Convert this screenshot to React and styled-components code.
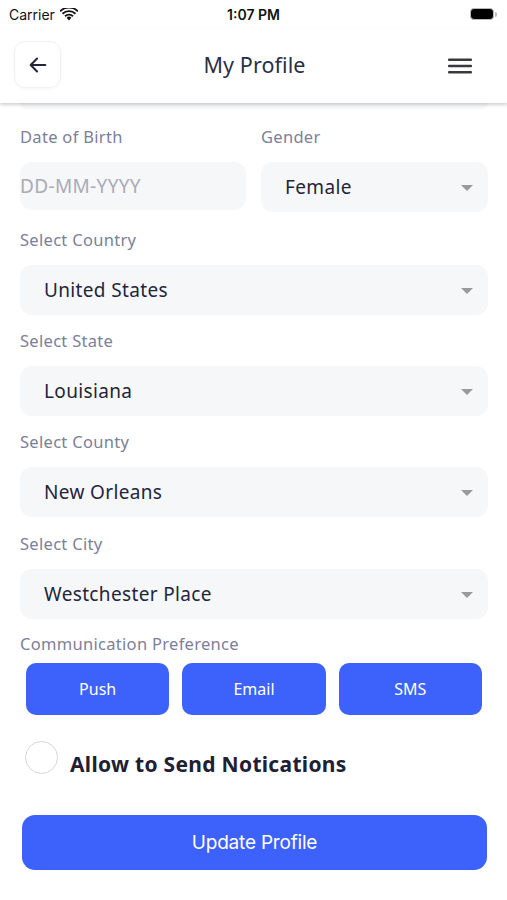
import React from "react";
import styled, { createGlobalStyle } from "styled-components";

const GlobalStyle = createGlobalStyle`
  html, body {
    margin: 0;
    padding: 0;
    background: #ffffff;
  }
  * {
    box-sizing: border-box;
  }
`;

const Screen = styled.div`
  width: 507px;
  height: 900px;
  overflow: hidden;
  background: #fff;
  font-family: "Noto Sans", "Open Sans", sans-serif;
`;

const StatusBar = styled.div`
  height: 28px;
  display: grid;
  grid-template-columns: 1fr auto 1fr;
  align-items: center;
  padding: 0 9px;
  font-family: "Inter", "Liberation Sans", sans-serif;
  font-size: 14px;
  color: #111;
`;

const Carrier = styled.div`
  display: flex;
  align-items: center;
  gap: 5px;
`;

const Clock = styled.div`
  font-weight: 600;
`;

const Battery = styled.div`
  justify-self: end;
  display: flex;
  align-items: center;
  gap: 1px;
  margin-right: 1px;
`;

const BatteryBody = styled.div`
  width: 24px;
  height: 12px;
  border-radius: 4px;
  background: #000;
  border: 1.5px solid #b9b9b9;
`;

const BatteryTip = styled.div`
  width: 2px;
  height: 5px;
  border-radius: 0 2px 2px 0;
  background: #b9b9b9;
`;

const Header = styled.header`
  height: 75px;
  display: flex;
  align-items: center;
  justify-content: space-between;
  padding: 0 35px 0 14px;
  box-shadow: 0 2px 3px rgba(0, 0, 0, 0.18);
  position: relative;
  z-index: 2;
  background: #fff;
`;

const BackButton = styled.div`
  width: 47px;
  height: 47px;
  border-radius: 11px;
  border: 1px solid #f1f1f3;
  box-shadow: 0 1px 3px rgba(0, 0, 0, 0.04);
  display: flex;
  align-items: center;
  justify-content: center;
  margin-top: -2px;
`;

const Title = styled.h1`
  margin: -3px 0 0 0;
  font-size: 21.5px;
  font-weight: 400;
  color: #2b2e45;
  letter-spacing: 0.1px;
`;

const Content = styled.main`
  padding: 0 19px 0 20px;
`;

const CutField = styled.div`
  height: 6px;
  background: #f6f7f9;
  border-radius: 0 0 12px 12px;
`;

const Row = styled.div`
  display: grid;
  grid-template-columns: ${(p) => p.$cols || "1fr"};
  column-gap: 15px;
`;

const Group = styled.div`
  display: flex;
  flex-direction: column;
`;

const Label = styled.label`
  height: ${(p) => p.$h || 52}px;
  display: flex;
  align-items: flex-end;
  padding-bottom: 14px;
  font-size: 16.5px;
  letter-spacing: 0.3px;
  color: #7c8098;
  white-space: nowrap;
`;

const Field = styled.div`
  height: ${(p) => p.$h || 50}px;
  background: #f6f7f9;
  border-radius: 12px;
  display: flex;
  align-items: center;
  justify-content: space-between;
  padding: ${(p) => (p.$flush ? "0 0 1px 0" : "0 15px 0 24px")};
  font-size: 19px;
  color: ${(p) => (p.$placeholder ? "#a9abb5" : "#23253a")};
  letter-spacing: 0.35px;
`;

const Caret = styled.span`
  width: 0;
  height: 0;
  border-left: 6px solid transparent;
  border-right: 6px solid transparent;
  border-top: 6px solid #9a9a9e;
  margin-top: 2px;
`;

const PrefLabel = styled(Label)`
  height: 44px;
  padding-bottom: 8px;
`;

const PrefRow = styled.div`
  display: grid;
  grid-template-columns: repeat(3, 1fr);
  column-gap: 13px;
  padding: 0 6px 0 6px;
`;

const PrefButton = styled.button`
  height: 52px;
  border: none;
  border-radius: 10px;
  background: #3d62fb;
  color: #fff;
  font-family: "Noto Sans", sans-serif;
  font-size: 16px;
`;

const CheckRow = styled.div`
  display: flex;
  align-items: flex-start;
  gap: 12px;
  padding: 26px 0 0 5px;
`;

const Radio = styled.span`
  width: 33px;
  height: 33px;
  border-radius: 50%;
  border: 1.5px solid #d6d6d8;
  flex-shrink: 0;
`;

const CheckText = styled.span`
  font-size: 21px;
  font-weight: 700;
  color: #1e2033;
  margin-top: 9px;
  letter-spacing: 0.3px;
`;

const SubmitButton = styled.button`
  width: 465px;
  height: 55px;
  margin: 37px 0 0 2px;
  border: none;
  border-radius: 13px;
  background: #3d62fb;
  color: #fff;
  font-family: "Inter", "Liberation Sans", sans-serif;
  font-size: 19px;
  letter-spacing: -0.2px;
`;

const selects = [
  { label: "Select Country", value: "United States", h: 53 },
  { label: "Select State", value: "Louisiana", h: 51 },
  { label: "Select County", value: "New Orleans", h: 51 },
  { label: "Select City", value: "Westchester Place", h: 52 },
];

const WifiIcon = () => (
  <svg width="18" height="13" viewBox="0 0 18 13">
    <path d="M9 12.5 6.6 9.8a3.4 3.4 0 0 1 4.8 0Z" fill="#111" />
    <path d="M4.4 7.6a6.5 6.5 0 0 1 9.2 0l-1.3 1.4a4.6 4.6 0 0 0-6.6 0Z" fill="#111" />
    <path d="M1.9 5.1a10 10 0 0 1 14.2 0l-1.3 1.4a8.1 8.1 0 0 0-11.6 0Z" fill="#111" />
    <path d="M-0.5 2.6a13.5 13.5 0 0 1 19 0l-1.2 1.3a11.7 11.7 0 0 0-16.6 0Z" fill="#111" />
  </svg>
);

const App = () => {
  return (
    <Screen>
      <GlobalStyle />
      <StatusBar>
        <Carrier>
          Carrier <WifiIcon />
        </Carrier>
        <Clock>1:07 PM</Clock>
        <Battery>
          <BatteryBody />
          <BatteryTip />
        </Battery>
      </StatusBar>
      <Header>
        <BackButton>
          <svg width="22" height="22" viewBox="0 0 24 24" fill="none" stroke="#23253a" strokeWidth="2.2" strokeLinecap="round" strokeLinejoin="round">
            <path d="M20 12H4.5" />
            <path d="M11 5l-7 7 7 7" />
          </svg>
        </BackButton>
        <Title>My Profile</Title>
        <svg width="24" height="16" viewBox="0 0 24 16">
          <rect x="0" y="0.5" width="24" height="2.4" rx="1" fill="#3a3a3c" />
          <rect x="0" y="6.8" width="24" height="2.4" rx="1" fill="#3a3a3c" />
          <rect x="0" y="13.1" width="24" height="2.4" rx="1" fill="#3a3a3c" />
        </svg>
      </Header>
      <Content>
        <CutField />
        <Row $cols="226px 1fr">
          <Group>
            <Label $h={53}>Date of Birth</Label>
            <Field $h={48} $flush $placeholder>DD-MM-YYYY</Field>
          </Group>
          <Group>
            <Label $h={53}>Gender</Label>
            <Field>
              Female
              <Caret />
            </Field>
          </Group>
        </Row>
        {selects.map((s) => (
          <Group key={s.label}>
            <Label $h={s.h}>{s.label}</Label>
            <Field>
              {s.value}
              <Caret />
            </Field>
          </Group>
        ))}
        <PrefLabel>Communication Preference</PrefLabel>
        <PrefRow>
          <PrefButton>Push</PrefButton>
          <PrefButton>Email</PrefButton>
          <PrefButton>SMS</PrefButton>
        </PrefRow>
        <CheckRow>
          <Radio />
          <CheckText>Allow to Send Notications</CheckText>
        </CheckRow>
        <SubmitButton>Update Profile</SubmitButton>
      </Content>
    </Screen>
  );
};

export default App;
